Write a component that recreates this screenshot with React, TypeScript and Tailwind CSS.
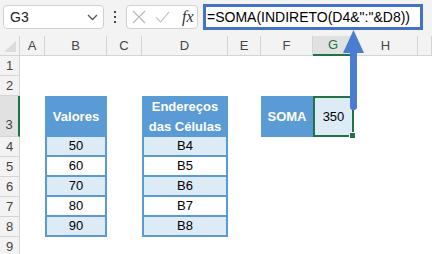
import React from "react";

const cols = ["", "A", "B", "C", "D", "E", "F", "G", "H", ""];
const rows = ["", "1", "2", "3", "4", "5", "6", "7", "8", "9"];
const valores = ["50", "60", "70", "80", "90"];
const enderecos = ["B4", "B5", "B6", "B7", "B8"];

const ColHeader = ({ label, i }: { label: string; i: number }) => {
  if (i === 0) {
    return (
      <div className="relative bg-[#f3f3f3] border-r border-b border-[#d4d4d4]">
        <div className="absolute right-[3px] bottom-[3px] w-0 h-0 border-l-[12px] border-l-transparent border-b-[11px] border-b-[#dcdcdc]" />
      </div>
    );
  }
  if (label === "G") {
    return (
      <div className="flex items-center justify-center bg-[#e1e1e1] border-r border-b-2 border-r-[#d4d4d4] border-b-[#217346] text-[13px] text-[#217346]">
        G
      </div>
    );
  }
  return (
    <div className="flex items-center justify-center bg-[#f3f3f3] border-r border-b border-[#d4d4d4] text-[13px] text-[#444]">
      {label}
    </div>
  );
};

const RowHeader = ({ label }: { label: string }) => {
  if (label === "3") {
    return (
      <div className="flex items-end justify-center pb-[2px] bg-[#e1e1e1] border-b border-r-2 border-b-[#d4d4d4] border-r-[#217346] text-[13px] text-[#444]">
        3
      </div>
    );
  }
  return (
    <div className="flex items-center justify-center bg-[#f3f3f3] border-r border-b border-[#d4d4d4] text-[13px] text-[#444]">
      {label}
    </div>
  );
};

const Cell = ({ r, c }: { r: number; c: number }) => {
  const col = cols[c];
  if (r === 3 && col === "B") {
    return (
      <div className="flex items-center justify-center bg-[#5b9bd5] text-white font-bold text-[13px]">
        Valores
      </div>
    );
  }
  if (r === 3 && col === "D") {
    return (
      <div className="flex flex-col items-center justify-center bg-[#5b9bd5] text-white font-bold text-[13px] leading-[20px]">
        <span>Endereços</span>
        <span>das Células</span>
      </div>
    );
  }
  if (r === 3 && col === "F") {
    return (
      <div className="flex items-center justify-center bg-[#5b9bd5] text-white font-bold text-[13px]">
        SOMA
      </div>
    );
  }
  if (r === 3 && col === "G") {
    return (
      <div className="relative flex items-center justify-center bg-[#ddebf7] border-2 border-[#217346] text-[13px] text-black">
        350
        <div className="absolute -right-[3px] -bottom-[3px] w-[6px] h-[6px] bg-[#217346] border-l border-t border-white" />
      </div>
    );
  }
  if (r >= 4 && r <= 8 && (col === "B" || col === "D")) {
    const even = r % 2 === 0;
    const text = col === "B" ? valores[r - 4] : enderecos[r - 4];
    return (
      <div
        className={
          even
            ? "flex items-center justify-center bg-[#ddebf7] border-x-2 border-b-2 border-[#5b9bd5] text-[13px] text-black"
            : "flex items-center justify-center bg-white border-x-2 border-b-2 border-[#5b9bd5] text-[13px] text-black"
        }
      >
        {text}
      </div>
    );
  }
  return <div className="bg-white" />;
};

export default function App() {
  return (
    <div className="relative w-[432px] h-[254px] overflow-hidden bg-white font-['Liberation_Sans',Arial,sans-serif]">
      {/* formula bar */}
      <div className="flex items-start h-[36px] pt-[4px] pl-[3px] bg-[#f3f3f3]">
        <div className="flex items-center justify-between mt-[1px] w-[101px] h-[24px] pl-[6px] pr-[5px] bg-white border border-[#d0d0d0] rounded-[4px] text-[14px] text-[#222]">
          <span>G3</span>
          <svg width="11" height="7" viewBox="0 0 11 7" fill="none" stroke="#555" strokeWidth="1.3">
            <path d="M1 1l4.5 4.5L10 1" />
          </svg>
        </div>
        <div className="flex flex-col items-center justify-center gap-[3px] w-[22px] h-[26px]">
          <span className="w-[2px] h-[2px] bg-[#444]" />
          <span className="w-[2px] h-[2px] bg-[#444]" />
          <span className="w-[2px] h-[2px] bg-[#444]" />
        </div>
        <div className="flex items-center mt-[1px] w-[72px] h-[24px] pl-[5px] bg-white border border-[#d0d0d0] rounded-[4px]">
          <svg width="14" height="14" viewBox="0 0 14 14" fill="none" stroke="#b8b8b8" strokeWidth="1.1">
            <path d="M1 1l12 12M13 1L1 13" />
          </svg>
          <svg className="ml-[9px]" width="15" height="12" viewBox="0 0 15 12" fill="none" stroke="#b8b8b8" strokeWidth="1.1">
            <path d="M1 6l4.5 5L14 1" />
          </svg>
          <span className="ml-[12px] font-['Liberation_Serif',serif] italic text-[16px] text-[#333] leading-none">fx</span>
        </div>
        <div className="flex items-center ml-[5px] w-[220px] h-[26px] pl-[1px] border-[3px] border-[#4472c4] bg-white text-[14px] text-black whitespace-nowrap">
          =SOMA(INDIRETO(D4&amp;":"&amp;D8))
        </div>
      </div>

      {/* sheet */}
      <div className="grid grid-cols-[20px_25px_62px_35px_86px_33px_52px_41px_64px_14px] grid-rows-[20px_20px_20px_41px_20px_20px_20px_20px_20px_20px]">
        {rows.map((rl, r) =>
          cols.map((cl, c) => {
            const key = `${r}-${c}`;
            if (r === 0) return <ColHeader key={key} label={cl} i={c} />;
            if (c === 0) return <RowHeader key={key} label={rl} />;
            return <Cell key={key} r={r} c={c} />;
          })
        )}
      </div>

      {/* arrow */}
      <svg className="absolute left-[340px] top-[28px]" width="28" height="86" viewBox="0 0 28 86">
        <polygon points="13.5,2 3,25 24,25" fill="#4a7dd0" />
        <rect x="10" y="22" width="7" height="60" rx="3" fill="#4a7dd0" />
      </svg>
    </div>
  );
}
